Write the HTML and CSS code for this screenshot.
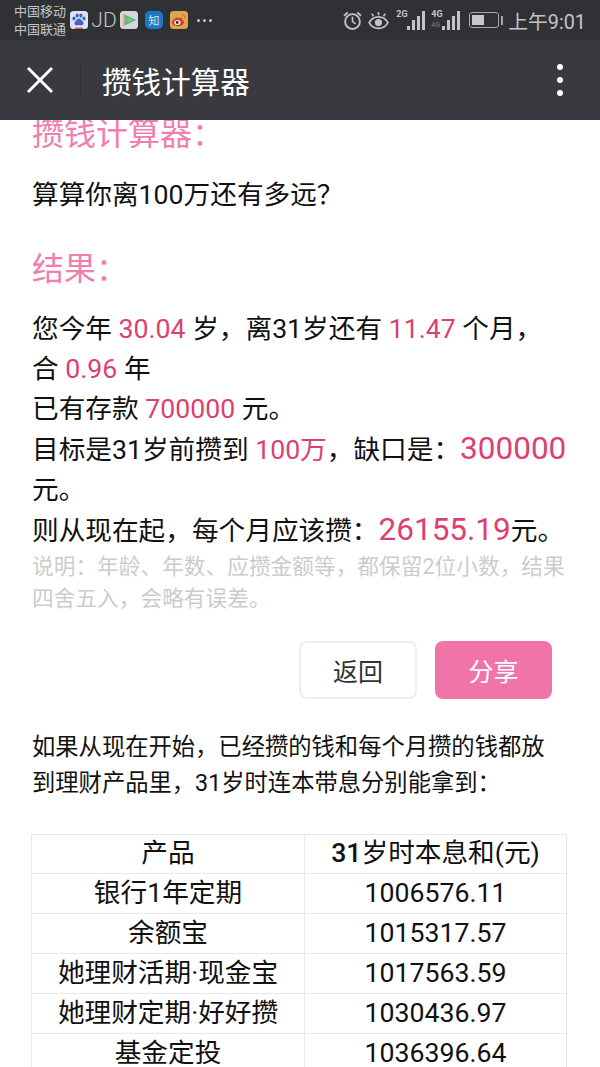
FILE: index.html
```html
<!DOCTYPE html>
<html lang="zh-CN">

<head>
    <meta charset="UTF-8">
    <meta name="viewport" content="width=device-width, initial-scale=1.0">
    <title>攒钱计算器</title>
    <link rel="stylesheet" href="styles.css">
</head>

<body>
    <!-- Phone status bar -->
    <div class="status-bar">
        <div class="carriers">
            <span>中国移动</span>
            <span>中国联通</span>
        </div>
        <svg class="app-icon" viewBox="0 0 18 18" aria-hidden="true">
            <rect width="18" height="18" rx="3.5" fill="#dfe3ea"/>
            <g fill="#3f63c9">
                <ellipse cx="4" cy="7.6" rx="1.6" ry="2"/>
                <ellipse cx="7.2" cy="4.6" rx="1.6" ry="2.1"/>
                <ellipse cx="10.9" cy="4.6" rx="1.6" ry="2.1"/>
                <ellipse cx="14" cy="7.6" rx="1.6" ry="2"/>
                <path d="M9 7.6c-2 0-2.4 2-3.7 3-1.4 1.1-1.2 3.7 1 3.7 1.1 0 1.8-.4 2.7-.4s1.6.4 2.7.4c2.2 0 2.4-2.6 1-3.7-1.3-1-1.7-3-3.700-3z"/>
            </g>
            <rect x="5" y="16.6" width="8" height="1.4" fill="#d9564f"/>
        </svg>
        <span class="jd">JD</span>
        <svg class="app-icon" viewBox="0 0 18 18" aria-hidden="true">
            <rect width="18" height="18" rx="3.5" fill="#d5d8d6"/>
            <path d="M2.8 2.8 16 9 2.8 15.2c.8-4.1.8-8.3 0-12.4z" fill="#f2a33a"/>
            <path d="M5 3.8 16 9 5 14.2c.6-3.400.6-7 0-10.400z" fill="#39b6d8"/>
            <path d="M7 6 13.2 9 7 12c.3-2 .3-4 0-6z" fill="#8ccb3c"/>
        </svg>
        <span class="app-icon zhihu">知</span>
        <svg class="app-icon" viewBox="0 0 18 18" aria-hidden="true">
            <rect width="18" height="18" rx="3.5" fill="#d9a94e"/>
            <path d="M7.8 6.2c-3 .6-5.800 3.200-5.800 5.600 0 2 2.400 3.400 5.600 3.400 3.600 0 6.400-1.800 6.400-4 0-1.300-1.100-1.900-1.900-2.100.3-.9.3-1.700-.2-2.100-.8-.6-2.300-.3-3.500.4-.1-.9-.2-1.400-.6-1.200z" fill="#d8392f"/>
            <ellipse cx="7.4" cy="11.4" rx="3.2" ry="2.5" fill="#f6efe4"/>
            <circle cx="7.2" cy="11.5" r="1.4" fill="#2b2b2b"/>
            <path d="M11.5 3.500c2 0 3.700 1.500 3.500 4" fill="none" stroke="#e8772c" stroke-width="1.3"/>
        </svg>
        <div class="more-dots"><i></i><i></i><i></i></div>

        <div class="status-right">
            <svg class="alarm" viewBox="0 0 18 18" aria-hidden="true">
                <circle cx="9" cy="10" r="7" fill="none" stroke="#c4c4c6" stroke-width="1.8"/>
                <path d="M9 5.500V10l3 2.200" fill="none" stroke="#c4c4c6" stroke-width="1.5"/>
                <path d="M1 4.500 4.500 1.300M17 4.500 13.500 1.300" fill="none" stroke="#c4c4c6" stroke-width="1.8"/>
            </svg>
            <svg class="eye" viewBox="0 0 20 18" aria-hidden="true">
                <path d="M1 11c2.200-3.800 5.200-5.500 9-5.500s6.800 1.700 9 5.500c-2.200 3.800-5.200 5.500-9 5.500S3.200 14.800 1 11z" fill="none" stroke="#c4c4c6" stroke-width="1.7"/>
                <circle cx="10" cy="11" r="3.4" fill="#c4c4c6"/>
                <path d="M3.500 2.500 5.200 5M10 .8V4M16.500 2.500 14.800 5" fill="none" stroke="#c4c4c6" stroke-width="1.5"/>
            </svg>
            <div class="signal">
                <span class="net">2G</span>
                <div class="bars"><i class="b1"></i><i class="b2"></i><i class="b3"></i><i class="b4"></i></div>
            </div>
            <div class="signal">
                <span class="net">4G</span>
                <span class="net net-sub">4G</span>
                <div class="bars"><i class="b1"></i><i class="b2"></i><i class="b3"></i><i class="b4"></i></div>
            </div>
            <div class="battery">
                <div class="battery-body"><div class="battery-level"></div></div>
                <div class="battery-cap"></div>
            </div>
            <span class="clock">上午9:01</span>
        </div>
    </div>

    <!-- WeChat title bar -->
    <div class="nav-bar">
        <div class="nav-close">
            <svg width="28" height="28" viewBox="0 0 28 28" aria-hidden="true">
                <path d="M2 2 26 26M26 2 2 26" stroke="#fff" stroke-width="3" fill="none"/>
            </svg>
        </div>
        <div class="nav-title">攒钱计算器</div>
        <div class="nav-menu"><i></i><i></i><i></i></div>
    </div>

    <div class="page">
        <h2 class="heading heading-first">攒钱计算器：</h2>
        <p class="intro">算算你离100万还有多远？</p>

        <h2 class="heading">结果：</h2>
        <p class="result">
            您今年 <span class="num">30.04</span> 岁，离31岁还有 <span class="num">11.47</span> 个月，<br>
            合 <span class="num">0.96</span> 年<br>
            已有存款 <span class="num">700000</span> 元。<br>
            目标是31岁前攒到 <span class="num">100万</span>，缺口是：<span class="num num-big">300000</span> 元。<br>
            则从现在起，每个月应该攒：<span class="num num-big">26155.19</span>元。
        </p>
        <p class="note">说明：年龄、年数、应攒金额等，都保留2位小数，结果四舍五入，会略有误差。</p>

        <div class="actions">
            <button class="btn btn-back">返回</button>
            <button class="btn btn-share">分享</button>
        </div>

        <p class="desc">如果从现在开始，已经攒的钱和每个月攒的钱都放到理财产品里，31岁时连本带息分别能拿到：</p>

        <table class="products">
            <tr><th>产品</th><th><b>31</b>岁时本息和(元)</th></tr>
            <tr><td>银行1年定期</td><td>1006576.11</td></tr>
            <tr><td>余额宝</td><td>1015317.57</td></tr>
            <tr><td>她理财活期·现金宝</td><td>1017563.59</td></tr>
            <tr><td>她理财定期·好好攒</td><td>1030436.97</td></tr>
            <tr><td>基金定投</td><td>1036396.64</td></tr>
        </table>
    </div>
</body>

</html>
```

FILE: styles.css
```css
/* Variables */
:root {
    --status-bg: #303135;
    --nav-bg: #393a3f;
    --status-color: #c4c4c6;
    --pink: #ee7fae;
    --pink-button: #f174a9;
    --number: #dd3f6f;
    --text: #111;
    --note: #ccc;
    --line: #e9e9e9;
}

* {
    box-sizing: border-box;
}

html,
body {
    height: 100%;
}

body {
    margin: 0;
    display: flex;
    flex-direction: column;
    overflow: hidden;
    background: #fff;
    color: var(--text);
    font-family: Roboto, "Noto Sans CJK SC", sans-serif;
}

/* Status bar */
.status-bar {
    flex: none;
    height: 40px;
    padding: 0 14px;
    display: flex;
    align-items: center;
    background: var(--status-bg);
    color: var(--status-color);
}

.carriers {
    width: 56px;
    padding-top: 2px;
    display: flex;
    flex-direction: column;
    font-size: 13px;
    line-height: 18px;
    white-space: nowrap;
}

.app-icon {
    width: 18px;
    height: 18px;
    flex: none;
}

.jd {
    width: 32px;
    text-align: center;
    font-size: 21px;
    font-weight: 300;
}

.app-icon + .app-icon,
.zhihu + svg {
    margin-left: 7px;
}

.zhihu {
    margin-left: 7px;
    display: flex;
    align-items: center;
    justify-content: center;
    border-radius: 5px;
    background: #1c78c4;
    color: #d8e6f2;
    font-size: 11px;
}

.more-dots {
    margin-left: 9px;
    display: flex;
    gap: 3px;
}

.more-dots i {
    width: 3px;
    height: 3px;
    border-radius: 50%;
    background: var(--status-color);
}

.status-right {
    margin-left: auto;
    display: flex;
    align-items: center;
}

.alarm {
    width: 19px;
    height: 19px;
}

.eye {
    width: 21px;
    height: 19px;
    margin-left: 6px;
}

.signal {
    position: relative;
    width: 29px;
    height: 20px;
    margin-left: 7px;
}

.signal + .signal {
    margin-left: 6px;
}

.net {
    position: absolute;
    left: 0;
    top: 0;
    font-size: 9px;
    line-height: 9px;
    font-weight: 700;
}

.net-sub {
    top: 12px;
    font-size: 7px;
    line-height: 7px;
    color: #66676a;
}

.bars {
    position: absolute;
    right: 0;
    bottom: 0;
    display: flex;
    align-items: flex-end;
    gap: 2px;
}

.bars i {
    width: 3px;
    background: var(--status-color);
}

.b1 { height: 4px; }
.b2 { height: 10px; }
.b3 { height: 14px; }
.b4 { height: 19px; }

.battery {
    margin-left: 9px;
    display: flex;
    align-items: center;
    gap: 2px;
}

.battery-body {
    width: 30px;
    height: 16px;
    padding: 2px;
    border: 1px solid #a8a8aa;
    border-radius: 3px;
}

.battery-level {
    width: 12px;
    height: 100%;
    background: #c8c8ca;
}

.battery-cap {
    width: 2px;
    height: 9px;
    background: #a8a8aa;
}

.clock {
    margin-left: 5px;
    font-size: 19.8px;
    white-space: nowrap;
}

/* Title bar */
.nav-bar {
    position: relative;
    z-index: 1;
    flex: none;
    height: 80px;
    display: flex;
    align-items: center;
    background: var(--nav-bg);
}

.nav-close {
    width: 81px;
    height: 40px;
    display: flex;
    align-items: center;
    justify-content: center;
    border-right: 1px solid #323337;
}

.nav-title {
    margin-left: 21px;
    color: #fff;
    font-size: 29.6px;
}

.nav-menu {
    margin-left: auto;
    margin-right: 37px;
    display: flex;
    flex-direction: column;
    gap: 7px;
}

.nav-menu i {
    width: 6px;
    height: 6px;
    border-radius: 50%;
    background: #fff;
}

/* Page content */
.page {
    flex: 1;
    min-height: 0;
    padding: 0 33px 0 32px;
}

.heading {
    margin: 0;
    color: var(--pink);
    font-size: 32px;
    font-weight: 400;
    line-height: 40px;
}

.heading-first {
    margin-top: -6px;
}

.intro {
    margin: 21px 0 0;
    font-size: 26.67px;
    line-height: 40px;
}

.intro + .heading {
    margin-top: 34px;
}

.result {
    margin: 20px 0 0;
    font-size: 26.67px;
    line-height: 40px;
}

.num {
    color: var(--number);
}

.num-big {
    font-size: 31.5px;
}

.note {
    margin: 0;
    color: var(--note);
    font-size: 21.7px;
    line-height: 32px;
}

.actions {
    margin-top: 26px;
    padding-right: 15px;
    display: flex;
    justify-content: flex-end;
    gap: 18px;
}

.btn {
    height: 58px;
    border-radius: 8px;
    font-family: inherit;
    font-size: 25px;
}

.btn-back {
    width: 118px;
    border: 2px solid #eee;
    background: #fff;
    color: #333;
}

.btn-share {
    width: 117px;
    border: 0;
    background: var(--pink-button);
    color: #fff;
}

.desc {
    margin: 30px 0 0;
    font-size: 23.3px;
    line-height: 36px;
}

.products {
    width: 536px;
    margin: 33px 0 0 -1px;
    border-collapse: collapse;
    table-layout: fixed;
    font-size: 26.67px;
}

.products th,
.products td {
    height: 40px;
    padding: 0 0 2px;
    border: 1px solid var(--line);
    font-weight: 400;
    text-align: center;
    line-height: 36px;
}

.products th {
    height: 39px;
}

.products th:first-child,
.products td:first-child {
    width: 273px;
}

.products b {
    font-weight: 500;
}
```
